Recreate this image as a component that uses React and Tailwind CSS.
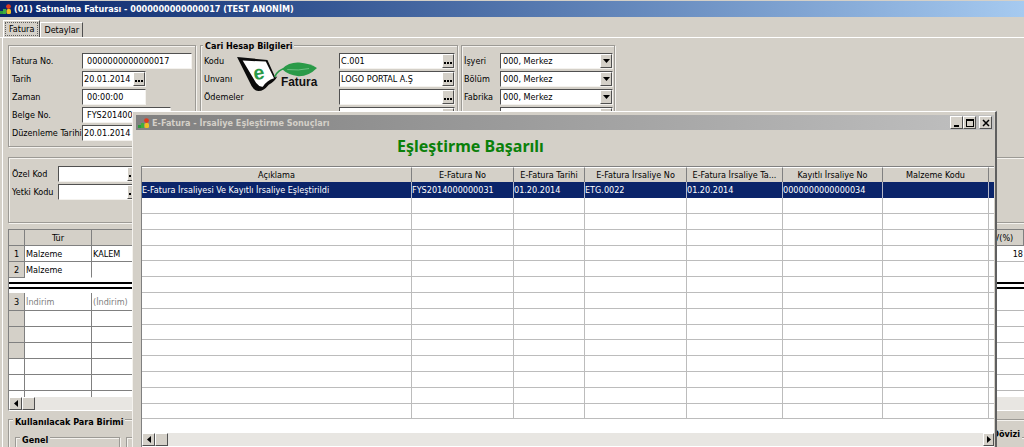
import { useState } from "react";

const invoiceRows = [
  { no: "1", type: "Malzeme", code: "KALEM", vat: "18" },
  { no: "2", type: "Malzeme", code: "", vat: "" },
];

const matchColumns = [
  { title: "Açıklama", width: "w-auto" },
  { title: "E-Fatura No", width: "w-[102px]" },
  { title: "E-Fatura Tarihi", width: "w-[71px]" },
  { title: "E-Fatura İrsaliye No", width: "w-[102px]" },
  { title: "E-Fatura İrsaliye Ta...", width: "w-[96px]" },
  { title: "Kayıtlı İrsaliye No", width: "w-[100px]" },
  { title: "Malzeme Kodu", width: "w-[106px]" },
  { title: "", width: "w-[5px]" },
];

const matchRow = [
  "E-Fatura İrsaliyesi Ve Kayıtlı İrsaliye Eşleştirildi",
  "FYS2014000000031",
  "01.20.2014",
  "ETG.0022",
  "01.20.2014",
  "0000000000000034",
  "",
  "",
];

const raised = "border border-t-white border-l-white border-r-[#505050] border-b-[#505050] bg-[#d4d0c8]";
const sunken = "border border-t-[#505050] border-l-[#505050] border-r-[#f4f2ee] border-b-[#f4f2ee] bg-white";
const etched = "border border-[#9c9a95] shadow-[1px_1px_0_#f4f2ee,inset_1px_1px_0_#f4f2ee]";

function AppIcon() {
  return (
    <svg viewBox="0 0 12 12" className="size-3 shrink-0" aria-hidden="true">
      <rect x="0" y="8" width="3" height="3" fill="#2e9a3c" />
      <rect x="3" y="6" width="3" height="5" fill="#3fae3f" />
      <circle cx="8.5" cy="3.6" r="2.4" fill="#e03a1e" />
      <rect x="6.5" y="6" width="4.5" height="5" rx="1.5" fill="#f0c020" />
    </svg>
  );
}

function EFaturaLogo() {
  return (
    <svg viewBox="708 162 252 112" className="absolute left-[35px] top-[9px] h-[37px] w-[84px]" role="img" aria-label="e-Fatura">
      <path d="M710 168 L802 177 L826 230 L832 226 Q826 240 806 252 Q790 272 774 271 Q762 270 754 256 Z" fill="#0b0b0b" />
      <path d="M727 179 L797 182 L822 232 Q800 238 788 258 Q778 260 768 247 Z" fill="#ffffff" />
      <path d="M824 228 Q834 206 856 203" fill="none" stroke="#2a9a48" strokeWidth="5" />
      <path d="M846 204 Q868 183 898 185 Q930 188 952 201 Q926 227 896 226 Q864 222 846 204 Z" fill="#2a9a48" />
      <path d="M862 206 Q896 210 928 203" fill="none" stroke="#8fd0a0" strokeWidth="2" />
      <text x="760" y="235" fontSize="60" fontWeight="bold" fill="#2a9a48" fontFamily="Liberation Sans, Arial, sans-serif" transform="rotate(-10 780 222)">
        e
      </text>
      <text x="843" y="257" fontSize="36" fontWeight="bold" fill="#111111" fontFamily="Liberation Sans, Arial, sans-serif">
        Fatura
      </text>
    </svg>
  );
}

function DotsButton({ label }) {
  return (
    <button type="button" aria-label={label} className={`flex w-3 shrink-0 items-end justify-center pb-[3px] ${raised}`}>
      <svg viewBox="0 0 8 2" className="h-0.5 w-2" fill="#000000" aria-hidden="true">
        <path d="M0 0h2v2H0zM3 0h2v2H3zM6 0h2v2H6z" />
      </svg>
    </button>
  );
}

function Field({ id, label, value = "", labelWidth, width, pad = "pl-px", picker = false }) {
  return (
    <div className="flex h-4 items-center">
      <label htmlFor={id} className={`shrink-0 whitespace-nowrap ${labelWidth}`}>
        {label}
      </label>
      <div className={`flex h-4 shrink-0 ${sunken} ${width}`}>
        <input id={id} defaultValue={value} className={`min-w-0 flex-1 outline-none ${pad}`} />
        {picker && <DotsButton label={`${label} seç`} />}
      </div>
    </div>
  );
}

function SelectField({ id, label }) {
  return (
    <div className="flex h-4 items-center">
      <label htmlFor={id} className="w-9 shrink-0">
        {label}
      </label>
      <div className={`relative h-4 flex-1 ${sunken}`}>
        <select id={id} className="h-full w-full appearance-none pl-0.5 outline-none">
          <option>000, Merkez</option>
        </select>
        <span className={`pointer-events-none absolute inset-y-0 right-0 flex w-3 items-center justify-center ${raised}`}>
          <svg viewBox="0 0 7 4" className="h-1 w-[7px]" aria-hidden="true">
            <path d="M0 0h7L3.5 4z" />
          </svg>
        </span>
      </div>
    </div>
  );
}

function ScrollBar({ right = false }) {
  return (
    <div className="flex h-[13px] shrink-0 bg-[#e8e6e2]">
      <button type="button" aria-label="Sola kaydır" className={`flex w-[13px] items-center justify-center ${raised}`}>
        <svg viewBox="0 0 4 7" className="h-[7px] w-1" aria-hidden="true">
          <path d="M4 0v7L0 3.5z" />
        </svg>
      </button>
      <div className={`w-[13px] ${raised}`} />
      {right && (
        <button type="button" aria-label="Sağa kaydır" className={`ml-auto flex w-[11px] items-center justify-center ${raised}`}>
          <svg viewBox="0 0 4 7" className="h-[7px] w-1" aria-hidden="true">
            <path d="M0 0v7l4-3.5z" />
          </svg>
        </button>
      )}
    </div>
  );
}

function InvoiceTable() {
  const cell = "border-r border-b border-[#808080] p-0 pl-px";
  const head = "border-r border-b border-[#808080] bg-[#d4d0c8] p-0 font-normal";
  return (
    <table className="w-full table-fixed border-separate border-spacing-0 bg-white">
      <colgroup>
        <col className="w-4" />
        <col className="w-[67px]" />
        <col />
        <col className="w-10" />
      </colgroup>
      <thead>
        <tr className="h-4">
          <th className={head} />
          <th className={head}>Tür</th>
          <th className={head} />
          <th className={`${head} text-center`}>V(%)</th>
        </tr>
      </thead>
      <tbody>
        {invoiceRows.map((row, i) => (
          <tr key={row.no} className="h-4">
            <td className={`${head} text-center`}>{row.no}</td>
            <td className={`${cell} ${i === 1 ? "border-b-white" : ""}`}>{row.type}</td>
            <td className={`${cell} ${i === 1 ? "border-b-white" : ""}`}>{row.code}</td>
            <td className={`border-b p-0 pr-px text-right ${i === 1 ? "border-white" : "border-[#b8b8b8]"}`}>{row.vat}</td>
          </tr>
        ))}
        {/* divider between goods and discount lines */}
        <tr className="h-[15px]">
          <td colSpan={4} className="p-0">
            <div className="h-[7px] border-y-2 border-black" />
          </td>
        </tr>
        <tr className="h-[18px] text-[#808080]">
          <td className={`${head} text-center text-black`}>3</td>
          <td className={cell}>İndirim</td>
          <td className={cell}>(İndirim)</td>
          <td className="border-b border-[#b8b8b8] p-0" />
        </tr>
        {[0, 1, 2, 3, 4].map((i) => (
          <tr key={i} className="h-4">
            <td className={i < 3 ? head : cell} />
            <td className={cell} />
            <td className={cell} />
            <td className="border-b border-[#b8b8b8] p-0" />
          </tr>
        ))}
        <tr className="h-[6px]">
          <td className="border-r border-[#808080] p-0" />
          <td className="border-r border-[#808080] p-0" />
          <td className="border-r border-[#808080] p-0" />
          <td className="p-0" />
        </tr>
      </tbody>
    </table>
  );
}

function MatchTable() {
  return (
    <table className="w-full table-fixed border-separate border-spacing-0">
      <colgroup>
        {matchColumns.map((col, i) => (
          <col key={i} className={col.width} />
        ))}
      </colgroup>
      <thead>
        <tr className="h-[15px]">
          {matchColumns.map((col, i) => (
            <th key={i} className="overflow-hidden border-t border-r border-t-white border-r-[#808080] bg-[#d4d0c8] p-0 font-normal whitespace-nowrap last:border-r-0">
              {col.title}
            </th>
          ))}
        </tr>
      </thead>
      <tbody>
        <tr className="h-4 bg-[#0a246a] text-white">
          {matchRow.map((text, i) => (
            <td key={i} className="overflow-hidden border-r border-[#b4b8c8] p-0 whitespace-nowrap last:border-r-0">
              {text}
            </td>
          ))}
        </tr>
        {Array.from({ length: 14 }, (_, r) => (
          <tr key={r} className={r % 5 === 3 ? "h-[15px]" : "h-4"}>
            {matchColumns.map((_, i) => (
              <td key={i} className="border-r border-b border-[#bcbcbc] p-0 last:border-r-0" />
            ))}
          </tr>
        ))}
      </tbody>
    </table>
  );
}

function MatchDialog({ onClose }) {
  const winButton = `flex h-[13px] w-[13px] items-center justify-center ${raised}`;
  return (
    <section
      role="dialog"
      aria-labelledby="dialog-title"
      className="absolute top-[111px] right-[27px] bottom-0 left-[132px] flex flex-col border-t border-r-2 border-l border-t-white border-r-[#606060] border-l-[#f4f2ee] bg-[#d4d0c8] pt-[3px] pl-[3px]"
    >
      <header className="mr-px flex h-[15px] shrink-0 items-center gap-0.5 bg-linear-to-r from-[#808080] to-[#c0c0c0] pr-0.5 pl-0.5">
        <AppIcon />
        <h2 id="dialog-title" className="font-bold text-[#d4d0c8]">
          E-Fatura - İrsaliye Eşleştirme Sonuçları
        </h2>
        <div className="ml-auto flex">
          <button type="button" aria-label="Simge durumuna küçült" className={winButton}>
            <svg viewBox="0 0 8 8" className="size-2" aria-hidden="true">
              <path d="M1 6h5v2H1z" />
            </svg>
          </button>
          <button type="button" aria-label="Ekranı kapla" className={winButton}>
            <svg viewBox="0 0 8 8" className="size-2" aria-hidden="true">
              <path d="M0 0h8v8H0zM1 2v5h6V2z" fillRule="evenodd" />
            </svg>
          </button>
          <button type="button" aria-label="Kapat" onClick={onClose} className={`ml-[3px] ${winButton}`}>
            <svg viewBox="0 0 8 8" className="size-2" stroke="#000000" strokeWidth="1.5" aria-hidden="true">
              <path d="M1 1l6 6M7 1L1 7" />
            </svg>
          </button>
        </div>
      </header>
      <p className="pt-1 pl-[261px] font-['Noto_Sans',sans-serif] text-base leading-6 font-bold text-[#0a800a]">Eşleştirme Başarılı</p>
      <div className="mt-2 mr-px ml-[5px] flex flex-1 flex-col border-t border-l border-[#808080] bg-white">
        <MatchTable />
        <div className="mt-auto mb-px">
          <ScrollBar right />
        </div>
      </div>
    </section>
  );
}

export default function App() {
  const [tab, setTab] = useState("Fatura");
  const [open, setOpen] = useState(true);

  return (
    <div className="relative flex h-screen flex-col overflow-hidden bg-[#d4d0c8] font-['DejaVu_Sans_Condensed','DejaVu_Sans',sans-serif] text-[9px] leading-3 text-black">
      <header className="flex h-[17px] shrink-0 items-center gap-0.5 border-t border-[#d4d0c8] bg-linear-to-r from-[#0a246a] to-[#a6caf0]">
        <AppIcon />
        <h1 className="font-bold text-white">(01) Satınalma Faturası - 0000000000000017 (TEST ANONİM)</h1>
      </header>

      <nav role="tablist" className="mt-[3px] flex shrink-0 items-end border-b border-white pl-[3px]">
        {["Fatura", "Detaylar"].map((name) => (
          <button
            key={name}
            type="button"
            role="tab"
            aria-selected={tab === name}
            onClick={() => setTab(name)}
            className={`border-t border-r border-l border-t-white border-r-[#505050] border-l-white ${tab === name ? "h-[17px] p-px" : "h-[15px] px-[3px]"}`}
          >
            {tab === name ? <span className="block border border-dotted border-[#606060] px-[3px] leading-3">{name}</span> : name}
          </button>
        ))}
      </nav>

      <main className="ml-0.5 flex flex-1 flex-col border-l border-white pt-[7px] pl-[5px]">
        <div className="flex h-[102px] shrink-0 gap-1">
          <div className={`flex w-[188px] flex-col gap-0.5 pt-[7px] pl-[3px] ${etched}`}>
            <Field id="no" label="Fatura No." value="0000000000000017" labelWidth="w-[70px]" width="w-[110px]" pad="pl-1" />
            <Field id="date" label="Tarih" value="20.01.2014" labelWidth="w-[70px]" width="w-16" picker />
            <Field id="time" label="Zaman" value="00:00:00" labelWidth="w-[70px]" width="w-16" pad="pl-1" />
            <Field id="doc" label="Belge No." value="FYS2014000000031" labelWidth="w-[70px]" width="w-[89px]" pad="pl-1" />
            <Field id="issued" label="Düzenleme Tarihi" value="20.01.2014" labelWidth="w-[70px]" width="w-16" picker />
          </div>

          <fieldset className={`relative flex w-[258px] flex-col gap-0.5 pt-[7px] pl-[3px] ${etched}`}>
            <legend className="absolute -top-1.5 left-0.5 bg-[#d4d0c8] px-0.5 font-bold">Cari Hesap Bilgileri</legend>
            <Field id="code" label="Kodu" value="C.001" labelWidth="w-[135px]" width="w-[116px]" picker />
            <Field id="name" label="Unvanı" value="LOGO PORTAL A.Ş" labelWidth="w-[135px]" width="w-[116px]" picker />
            <Field id="payment" label="Ödemeler" labelWidth="w-[135px]" width="w-[116px]" picker />
            <Field id="extra" label="" labelWidth="w-[135px]" width="w-[116px]" picker />
            <EFaturaLogo />
          </fieldset>

          <div className={`-ml-px flex w-[154px] flex-col gap-0.5 pt-[7px] pr-px pl-0.5 ${etched}`}>
            <SelectField id="workplace" label="İşyeri" />
            <SelectField id="division" label="Bölüm" />
            <SelectField id="factory" label="Fabrika" />
            <SelectField id="warehouse" label="Ambar" />
          </div>
        </div>

        <div className={`mt-2.5 -mr-0.5 flex h-[66px] shrink-0 flex-col gap-0.5 pt-2 pl-[3px] ${etched}`}>
          <Field id="special" label="Özel Kod" labelWidth="w-[46px]" width="w-[82px]" picker />
          <Field id="auth" label="Yetki Kodu" labelWidth="w-[46px]" width="w-[82px]" picker />
        </div>

        <div className="mt-1.5 shrink-0 border-t border-b border-l border-t-[#808080] border-b-white border-l-[#808080]">
          <InvoiceTable />
          <ScrollBar />
        </div>

        <fieldset className={`relative mt-2 -mr-0.5 flex h-[60px] shrink-0 gap-1.5 pt-[17px] pl-1.5 ${etched}`}>
          <legend className="absolute -top-1 left-1 bg-[#d4d0c8] px-0.5 font-bold">Kullanılacak Para Birimi</legend>
          <fieldset className={`relative h-10 w-[105px] ${etched}`}>
            <legend className="absolute -top-1 left-1 bg-[#d4d0c8] px-0.5 font-bold">Genel</legend>
          </fieldset>
          <fieldset className={`relative h-10 flex-1 ${etched}`}>
            <legend className="absolute -top-2.5 right-0.5 bg-[#d4d0c8] px-0.5 font-bold">Raporlama Dövizi</legend>
          </fieldset>
        </fieldset>
      </main>

      {open && <MatchDialog onClose={() => setOpen(false)} />}
    </div>
  );
}
